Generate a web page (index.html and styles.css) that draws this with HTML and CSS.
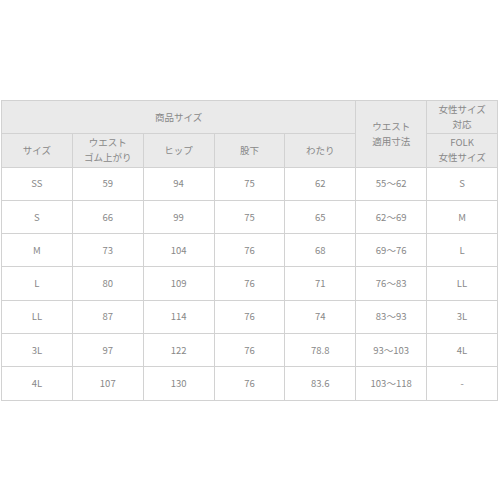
FILE: index.html
```html
<!DOCTYPE html>
<html lang="ja">
<head>
<meta charset="utf-8">
<link rel="stylesheet" href="styles.css">
</head>
<body>
<table class="size-table">
  <thead>
    <tr>
      <th colspan="5">商品サイズ</th>
      <th rowspan="2">ウエスト<br>適用寸法</th>
      <th>女性サイズ<br>対応</th>
    </tr>
    <tr>
      <th>サイズ</th>
      <th>ウエスト<br>ゴム上がり</th>
      <th>ヒップ</th>
      <th>股下</th>
      <th>わたり</th>
      <th>FOLK<br>女性サイズ</th>
    </tr>
  </thead>
  <tbody>
    <tr><td>SS</td><td>59</td><td>94</td><td>75</td><td>62</td><td>55～62</td><td>S</td></tr>
    <tr><td>S</td><td>66</td><td>99</td><td>75</td><td>65</td><td>62～69</td><td>M</td></tr>
    <tr><td>M</td><td>73</td><td>104</td><td>76</td><td>68</td><td>69～76</td><td>L</td></tr>
    <tr><td>L</td><td>80</td><td>109</td><td>76</td><td>71</td><td>76～83</td><td>LL</td></tr>
    <tr><td>LL</td><td>87</td><td>114</td><td>76</td><td>74</td><td>83～93</td><td>3L</td></tr>
    <tr><td>3L</td><td>97</td><td>122</td><td>76</td><td>78.8</td><td>93～103</td><td>4L</td></tr>
    <tr><td>4L</td><td>107</td><td>130</td><td>76</td><td>83.6</td><td>103～118</td><td>-</td></tr>
  </tbody>
</table>
</body>
</html>
```
FILE: styles.css
```css
html, body {
  margin: 0;
  padding: 0;
  background: #ffffff;
}
body {
  padding: 100px 0 0 1px;
  font-family: "Noto Sans CJK JP", "Noto Sans", sans-serif;
}
.size-table {
  width: 497px;
  border-collapse: collapse;
  table-layout: fixed;
  color: #888888;
  font-size: 9.5px;
  line-height: 15px;
}
.size-table th,
.size-table td {
  border: 1px solid #d2d2d2;
  text-align: center;
  vertical-align: middle;
  padding: 0;
  font-weight: normal;
}
.size-table th {
  background: #eaeaea;
}
.size-table tr {
  height: 33.3px;
}
```
